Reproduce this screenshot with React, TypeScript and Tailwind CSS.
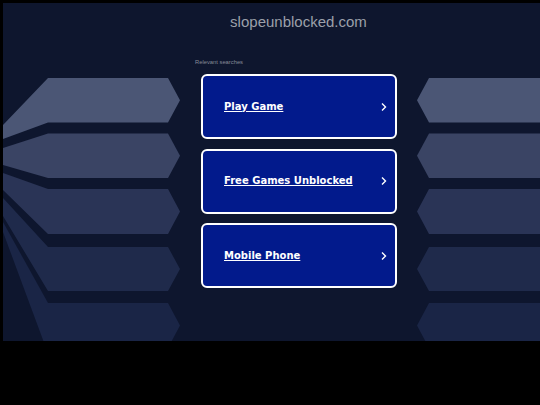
import React from "react";

const shapes: { pts: string; fill: string }[] = [
  { pts: "48,78 168,78 180,100.25 168,122.5 48,122.5 3,139 3,125", fill: "#4b5675" },
  { pts: "48,133.5 168,133.5 180,155.75 168,178 48,178 3,165 3,148", fill: "#3a4464" },
  { pts: "48,189 168,189 180,211.5 168,234 48,234 3,190 3,173", fill: "#2a3456" },
  { pts: "48,247 168,247 180,269 168,291 48,291 3,216 3,198", fill: "#1f2a4b" },
  { pts: "48,303 168,303 180,325.5 168,348 46,348 3,232 3,222", fill: "#1a2546" },
];

function Shapes({ mirror }: { mirror?: boolean }) {
  return (
    <svg
      width="177"
      height="285"
      viewBox="3 56 177 285"
      className={mirror ? "shrink-0 -scale-x-100" : "shrink-0"}
    >
      {shapes.map((s, i) => (
        <polygon key={i} points={s.pts} fill={s.fill} />
      ))}
    </svg>
  );
}

function Item({ label }: { label: string }) {
  return (
    <div className="flex h-[65px] w-[196px] items-center justify-between rounded-[6px] border-2 border-white bg-[#021a8c] pl-[21px] pr-[7px]">
      <span
        className="text-[10px] font-bold leading-[12px] text-white underline underline-offset-[1px]"
        style={{ fontFamily: '"DejaVu Sans", Verdana, sans-serif' }}
      >
        {label}
      </span>
      <svg width="8" height="10" viewBox="0 0 8 10">
        <polyline points="2,1.5 5.5,5 2,8.5" fill="none" stroke="white" strokeWidth="1.4" />
      </svg>
    </div>
  );
}

export default function App() {
  return (
    <div className="h-[405px] w-[540px] overflow-hidden bg-black pl-[3px] pt-[3px]">
      <div
        className="flex h-[338px] w-[591px] flex-col bg-[#0e162e]"
        style={{ fontFamily: '"Liberation Sans", Arial, sans-serif' }}
      >
        <div className="h-[53px] pt-[10px] text-center text-[15px] leading-[18px] text-[#9ca0aa]">
          slopeunblocked.com
        </div>
        <div className="flex flex-1 items-start">
          <Shapes />
          <div className="flex flex-1 flex-col pt-[2px]">
            <div className="pl-[15px] text-[5.8px] leading-[8px] text-[#868b98]">Relevant searches</div>
            <div className="mt-[8px] flex flex-col gap-[9.5px] pl-[21px]">
              <Item label="Play Game" />
              <Item label="Free Games Unblocked" />
              <Item label="Mobile Phone" />
            </div>
          </div>
          <Shapes mirror />
        </div>
      </div>
    </div>
  );
}
